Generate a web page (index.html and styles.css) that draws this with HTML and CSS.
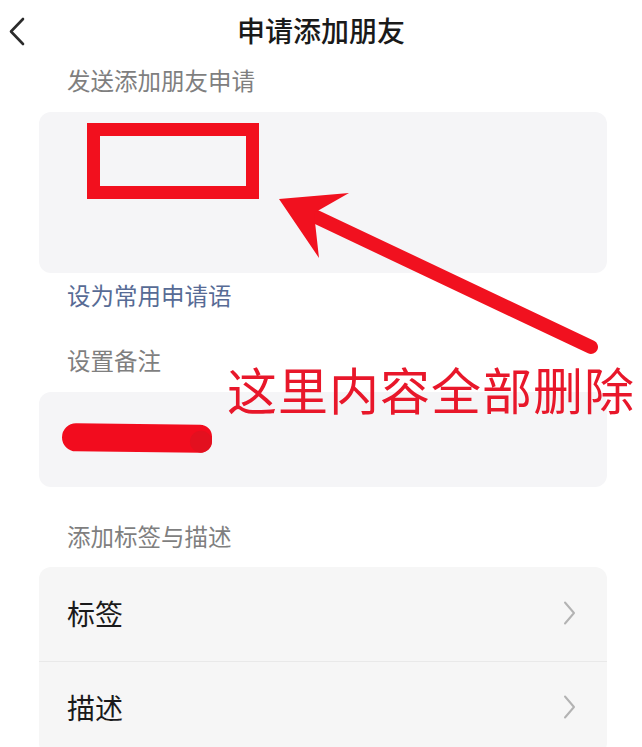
FILE: index.html
```html
<!DOCTYPE html>
<html>
    <head>
        <meta charset="utf-8">
        <title>申请添加朋友</title>
        <link rel="stylesheet" href="styles.css">
    </head>
    <body>
        <div class="page">
            <div class="header">
                <span class="back"><svg width="20" height="32" viewBox="0 0 20 32"><path d="M15 3 L3 15.5 L15 28" fill="none" stroke="#2b2b2b" stroke-width="2.6" stroke-linecap="round" stroke-linejoin="round"/></svg></span>
                <h1 class="title">申请添加朋友</h1>
            </div>

            <div class="label">发送添加朋友申请</div>
            <div class="card card_msg">
                <div class="mark_box"></div>
            </div>
            <div class="link">设为常用申请语</div>

            <div class="label label_gap">设置备注</div>
            <div class="card card_remark">
                <span class="scribble"><i></i></span>
            </div>

            <div class="label label_gap2">添加标签与描述</div>
            <div class="card card_list">
                <div class="row">
                    <span>标签</span>
                    <svg class="arrow_r" width="14" height="24" viewBox="0 0 14 24"><path d="M2 1.5 L11 12 L2 22.5" fill="none" stroke="#b3b3b3" stroke-width="2" stroke-linecap="round" stroke-linejoin="round"/></svg>
                </div>
                <div class="row">
                    <span>描述</span>
                    <svg class="arrow_r" width="14" height="24" viewBox="0 0 14 24"><path d="M2 1.5 L11 12 L2 22.5" fill="none" stroke="#b3b3b3" stroke-width="2" stroke-linecap="round" stroke-linejoin="round"/></svg>
                </div>
            </div>

            <!-- 标注：箭头 + 提示文字 -->
            <svg class="overlay" width="642" height="747" viewBox="0 0 642 747">
                <line x1="310" y1="214" x2="591" y2="347" stroke="#f1111f" stroke-width="14" stroke-linecap="round"/>
                <polygon points="279,199 349,193 314,213 319,258" fill="#f1111f"/>
            </svg>
            <div class="note">这里内容全部删除</div>
        </div>
    </body>
</html>
```

FILE: styles.css
```css
*{margin:0;padding:0;box-sizing:border-box;}
html,body{background:#fff;}
body{font-family:"Noto Sans CJK SC","Noto Sans",sans-serif;color:#1a1a1a;}
.page{position:relative;width:642px;height:747px;overflow:hidden;}

.header{height:64px;display:flex;align-items:center;justify-content:center;position:relative;}
.header .back{position:absolute;left:8px;top:16px;}
.title{font-size:28px;font-weight:500;line-height:60px;padding-bottom:4px;color:#1a1a1a;}

.label{padding-left:67px;font-size:23.5px;line-height:33px;padding-bottom:3px;color:#7f7f7f;}
.label_gap{margin-top:23px;}
.label_gap2{margin-top:33px;}
.link{padding-left:67px;font-size:23.5px;line-height:45px;padding-bottom:3px;color:#576b95;}

.card{margin:12px 35px 0 39px;background:#f5f5f7;border-radius:12px;}
.card_msg{height:161px;padding:11px 0 0 48px;}
.card_remark{height:95px;padding:32px 0 0 23px;}
.card_list{margin-top:11px;background:#f6f6f6;}

.mark_box{width:172px;height:76px;border:13px solid #f2101e;}

.scribble{display:block;position:relative;width:150px;height:28px;background:#f20c1e;border-radius:14px 12px 12px 14px;transform:rotate(0.6deg);}
.scribble i{position:absolute;right:0;top:6px;width:22px;height:22px;border-radius:50%;background:#e3101f;}

.row{height:94px;display:flex;align-items:center;justify-content:space-between;padding:0 30px 3px 28px;font-size:28px;color:#1a1a1a;}
.row + .row{border-top:1px solid #e9e9e9;}
.arrow_r{display:block;}

.overlay{position:absolute;left:0;top:0;pointer-events:none;}
.note{position:absolute;left:227px;top:361px;font-size:50px;line-height:54px;letter-spacing:1px;color:#e8172a;white-space:nowrap;}
```
